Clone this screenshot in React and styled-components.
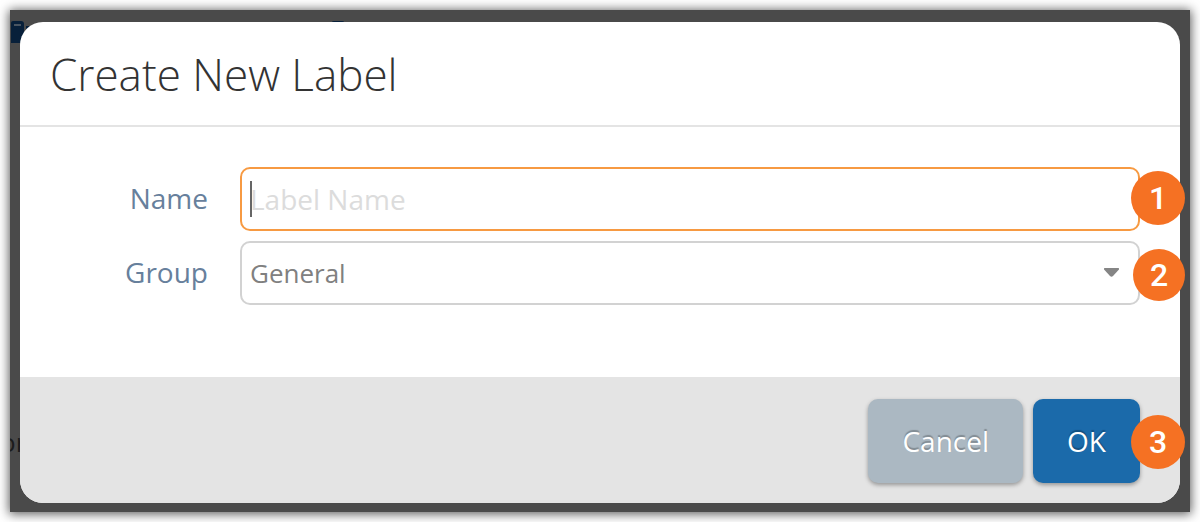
import React from "react";
import styled, { createGlobalStyle } from "styled-components";

const GlobalStyle = createGlobalStyle`
  *, *::before, *::after { box-sizing: border-box; }
  body {
    margin: 0;
    background: #fff;
    font-family: "Open Sans", "Noto Sans", sans-serif;
  }
`;

const Page = styled.main`
  padding: 10px;
`;

const Backdrop = styled.div`
  position: relative;
  padding: 12px 10px 9px;
  background: #4a4a4a;
  box-shadow: 0 1px 10px 1px rgba(0, 0, 0, 0.65);
`;

const Behind = styled.div`
  position: absolute;
  inset: 0;
  overflow: hidden;
`;

const BehindArt = styled.svg`
  position: absolute;
  top: 0;
  left: 0;
`;

const BehindText = styled.span`
  position: absolute;
  left: -10px;
  top: 416px;
  font-size: 26px;
  line-height: 32px;
  color: #1c1c1c;
`;

const Dialog = styled.form`
  position: relative;
  border-radius: 23px;
  background: #fff;
`;

const Header = styled.header`
  padding: 20px 30px 19px;
  border-bottom: 2px solid #e4e4e4;
`;

const Title = styled.h1`
  margin: 0;
  font-size: 44px;
  line-height: 64px;
  font-weight: 300;
  color: #333;
`;

const Body = styled.div`
  display: grid;
  gap: 10px;
  padding: 40px 40px 72px 0;
`;

const Field = styled.div`
  display: grid;
  grid-template-columns: 188px 1fr;
  column-gap: 32px;
  align-items: center;
`;

const Label = styled.label`
  padding-bottom: 2px;
  text-align: right;
  font-size: 28px;
  line-height: 38px;
  color: #67809c;
`;

const Control = styled.div`
  position: relative;
  display: flex;
`;

const TextInput = styled.input`
  width: 100%;
  height: 64px;
  padding: 0 8px;
  border: 2px solid #f79a42;
  border-radius: 10px;
  outline: none;
  background: #fff;
  font: 28px "Open Sans", "Noto Sans", sans-serif;
  color: #666;
  caret-color: transparent;

  &::placeholder {
    color: #dcdcdc;
    opacity: 1;
  }
`;

const Caret = styled.span`
  position: absolute;
  left: 10px;
  top: 14px;
  width: 2px;
  height: 36px;
  background: #666;
`;

const Select = styled.select`
  appearance: none;
  width: 100%;
  height: 64px;
  padding: 0 48px 0 8px;
  border: 2px solid #d2d2d2;
  border-radius: 10px;
  outline: none;
  background: #fff;
  font: 26px "Open Sans", "Noto Sans", sans-serif;
  color: #808080;
`;

const Arrow = styled.svg`
  position: absolute;
  right: 21px;
  top: 27px;
  pointer-events: none;
`;

const Footer = styled.footer`
  display: flex;
  justify-content: flex-end;
  gap: 10px;
  padding: 22px 40px 20px;
  border-radius: 0 0 23px 23px;
  background: #e4e4e4;
`;

const Button = styled.button`
  height: 84px;
  padding: 0 34px;
  border: 0;
  border-radius: 10px;
  background: ${(p) => (p.$primary ? "#1b6aaa" : "#abb8c2")};
  box-shadow: 0 2px 4px rgba(0, 0, 0, 0.35);
  font: 28px "Open Sans", "Noto Sans", sans-serif;
  color: #fff;
  text-shadow: 0 -2px 1px rgba(0, 0, 0, 0.25);
`;

const Callout = styled.span`
  position: absolute;
  right: -45px;
  top: ${(p) => p.$top}px;
  display: flex;
  align-items: center;
  justify-content: center;
  width: ${(p) => p.$size}px;
  height: ${(p) => p.$size}px;
  border-radius: 50%;
  background: #f57123;
  font: 500 32px Roboto, "Liberation Sans", sans-serif;
  color: #fff;
`;

export default function App() {
  return (
    <Page>
      <GlobalStyle />
      <Backdrop>
        <Behind aria-hidden="true">
          <BehindArt width="360" height="40">
            <path d="M1 33V13q0-2 2-2h8q3 0 3 3v19z" fill="#08203a" />
            <path d="M4 15h7" stroke="#4a5561" strokeWidth="2" />
            <path d="M16 16h8v12h-8z" fill="#08203a" />
            <path d="M322 12q0-1 2-1h8q2 0 2 1v3h-12z" fill="#08203a" />
          </BehindArt>
          <BehindText>or</BehindText>
        </Behind>
        <Dialog role="dialog" aria-labelledby="dialog-title" onSubmit={(e) => e.preventDefault()}>
          <Header>
            <Title id="dialog-title">Create New Label</Title>
          </Header>
          <Body>
            <Field>
              <Label htmlFor="label-name">Name</Label>
              <Control>
                <TextInput id="label-name" type="text" placeholder="Label Name" />
                <Caret />
                <Callout $top={4} $size={54}>1</Callout>
              </Control>
            </Field>
            <Field>
              <Label htmlFor="label-group">Group</Label>
              <Control>
                <Select id="label-group" defaultValue="General">
                  <option>General</option>
                </Select>
                <Arrow width="15" height="9" viewBox="0 0 15 9" aria-hidden="true">
                  <path d="M1 0h13q2 0 .5 2L9 8q-1.500 1.500-3 0L.5 2Q-1 0 1 0z" fill="#858585" />
                </Arrow>
                <Callout $top={8} $size={52}>2</Callout>
              </Control>
            </Field>
          </Body>
          <Footer>
            <Button type="button">Cancel</Button>
            <Control>
              <Button type="submit" $primary>OK</Button>
              <Callout $top={16} $size={54}>3</Callout>
            </Control>
          </Footer>
        </Dialog>
      </Backdrop>
    </Page>
  );
}
